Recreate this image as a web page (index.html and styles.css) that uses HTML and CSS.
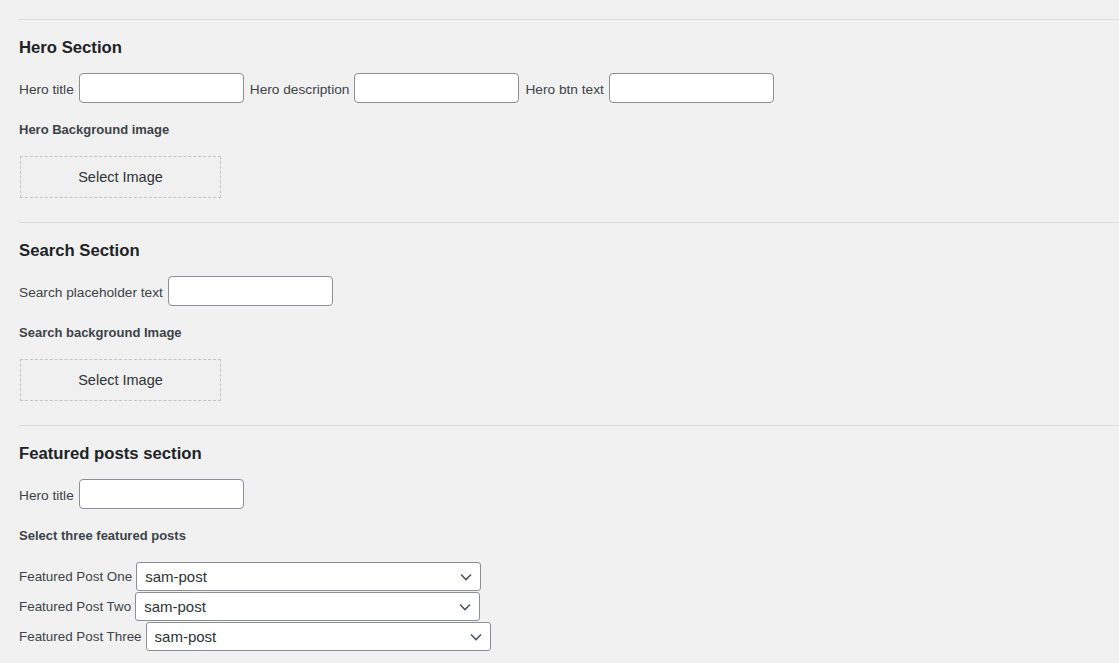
FILE: index.html
```html
<!DOCTYPE html>
<html>
<head>
<meta charset="utf-8">
<link rel="stylesheet" href="styles.css">
</head>
<body>
<div class="page">
  <section class="section">
    <h2 class="title">Hero Section</h2>
    <div class="row">
      <label class="lbl">Hero title</label><input class="txt" type="text">
      <label class="lbl">Hero description</label><input class="txt" type="text">
      <label class="lbl">Hero btn text</label><input class="txt" type="text">
    </div>
    <div class="sub">Hero Background image</div>
    <button class="pick">Select Image</button>
  </section>
  <section class="section">
    <h2 class="title">Search Section</h2>
    <div class="row">
      <label class="lbl">Search placeholder text</label><input class="txt" type="text">
    </div>
    <div class="sub">Search background Image</div>
    <button class="pick">Select Image</button>
  </section>
  <section class="section">
    <h2 class="title">Featured posts section</h2>
    <div class="row">
      <label class="lbl">Hero title</label><input class="txt" type="text">
    </div>
    <div class="sub">Select three featured posts</div>
    <div class="selects">
      <div class="srow">
        <label class="lbl">Featured Post One</label>
        <span class="selwrap">
          <select class="sel"><option>sam-post</option></select>
          <svg class="chev" width="12" height="8" viewBox="0 0 12 8"><path d="M1 1.5 L6 6.5 L11 1.5" fill="none" stroke="#50575e" stroke-width="1.6"/></svg>
        </span>
      </div>
      <div class="srow">
        <label class="lbl">Featured Post Two</label>
        <span class="selwrap">
          <select class="sel"><option>sam-post</option></select>
          <svg class="chev" width="12" height="8" viewBox="0 0 12 8"><path d="M1 1.5 L6 6.5 L11 1.5" fill="none" stroke="#50575e" stroke-width="1.6"/></svg>
        </span>
      </div>
      <div class="srow">
        <label class="lbl">Featured Post Three</label>
        <span class="selwrap">
          <select class="sel"><option>sam-post</option></select>
          <svg class="chev" width="12" height="8" viewBox="0 0 12 8"><path d="M1 1.5 L6 6.5 L11 1.5" fill="none" stroke="#50575e" stroke-width="1.6"/></svg>
        </span>
      </div>
    </div>
  </section>
</div>
</body>
</html>
```

FILE: styles.css
```css
html, body {
  margin: 0;
  padding: 0;
  background: #f1f1f1;
}
body {
  font-family: "Liberation Sans", Arial, sans-serif;
  font-size: 13.7px;
  color: #3c434a;
  overflow: hidden;
}
.page {
  padding: 19px 0 0 19px;
}
.section {
  border-top: 1px solid #dcdcde;
  padding-bottom: 24px;
}
.title {
  margin: 17px 0 0 0;
  font-size: 16.7px;
  line-height: 22px;
  font-weight: 700;
  color: #1d2327;
}
.row {
  display: flex;
  align-items: center;
  margin-top: 14px;
  height: 30px;
}
.lbl {
  margin-right: 5px;
  padding-top: 3px;
  white-space: nowrap;
  color: #3c434a;
}
.txt {
  box-sizing: border-box;
  width: 165px;
  height: 30px;
  margin: 0 6px 0 0;
  padding: 0 8px;
  border: 1px solid #8c8f94;
  border-radius: 4px;
  background: #fff;
  font: inherit;
}
.sub {
  margin-top: 18px;
  font-size: 13px;
  line-height: 18px;
  font-weight: 700;
  color: #3c434a;
}
.pick {
  display: block;
  box-sizing: border-box;
  width: 201px;
  height: 42px;
  margin: 17px 0 0 1px;
  border: 1px dashed #c3c4c7;
  background: #f0f0f1;
  font-family: "Liberation Sans", Arial, sans-serif;
  font-size: 14.5px;
  color: #2c3338;
  padding: 0;
}
.selects {
  margin-top: 16px;
  display: flex;
  flex-direction: column;
}
.srow {
  display: flex;
  align-items: center;
  height: 30px;
}
.srow .lbl {
  font-size: 13.4px;
  margin-right: 4px;
  padding-top: 1px;
}
.selwrap {
  position: relative;
  display: inline-block;
}
.sel {
  appearance: none;
  -webkit-appearance: none;
  box-sizing: border-box;
  width: 345px;
  height: 29px;
  margin: 0;
  padding: 0 24px 0 8px;
  border: 1px solid #8c8f94;
  border-radius: 3px;
  background: #fff;
  font-family: "Liberation Sans", Arial, sans-serif;
  font-size: 15px;
  color: #2c3338;
}
.chev {
  position: absolute;
  right: 9px;
  top: 11px;
  pointer-events: none;
}
```
